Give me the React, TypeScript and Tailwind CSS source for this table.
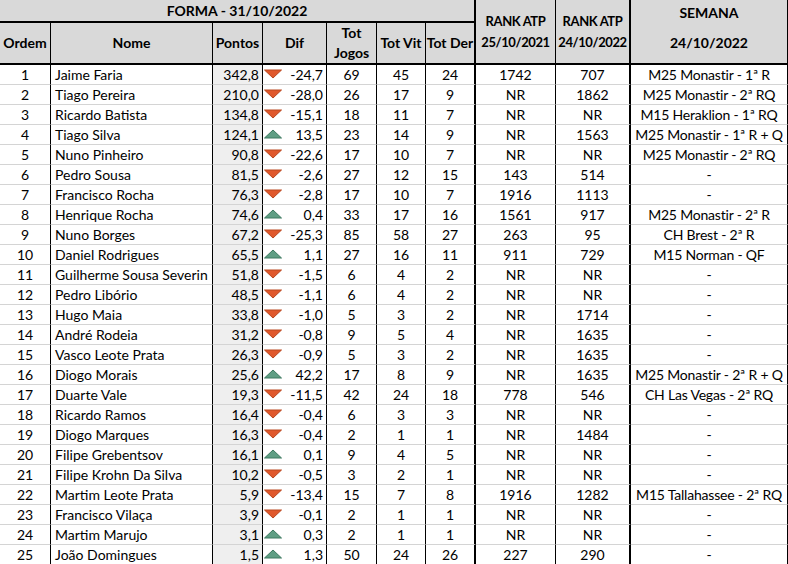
import React from "react";

type Row = [number, string, string, "u" | "d", string, number, number, number, string, string, string];

const rows: Row[] = [
  [1, "Jaime Faria", "342,8", "d", "-24,7", 69, 45, 24, "1742", "707", "M25 Monastir - 1ª R"],
  [2, "Tiago Pereira", "210,0", "d", "-28,0", 26, 17, 9, "NR", "1862", "M25 Monastir - 2ª RQ"],
  [3, "Ricardo Batista", "134,8", "d", "-15,1", 18, 11, 7, "NR", "NR", "M15 Heraklion - 1ª RQ"],
  [4, "Tiago Silva", "124,1", "u", "13,5", 23, 14, 9, "NR", "1563", "M25 Monastir - 1ª R + Q"],
  [5, "Nuno Pinheiro", "90,8", "d", "-22,6", 17, 10, 7, "NR", "NR", "M25 Monastir - 2ª RQ"],
  [6, "Pedro Sousa", "81,5", "d", "-2,6", 27, 12, 15, "143", "514", "-"],
  [7, "Francisco Rocha", "76,3", "d", "-2,8", 17, 10, 7, "1916", "1113", "-"],
  [8, "Henrique Rocha", "74,6", "u", "0,4", 33, 17, 16, "1561", "917", "M25 Monastir - 2ª R"],
  [9, "Nuno Borges", "67,2", "d", "-25,3", 85, 58, 27, "263", "95", "CH Brest - 2ª R"],
  [10, "Daniel Rodrigues", "65,5", "u", "1,1", 27, 16, 11, "911", "729", "M15 Norman - QF"],
  [11, "Guilherme Sousa Severin", "51,8", "d", "-1,5", 6, 4, 2, "NR", "NR", "-"],
  [12, "Pedro Libório", "48,5", "d", "-1,1", 6, 4, 2, "NR", "NR", "-"],
  [13, "Hugo Maia", "33,8", "d", "-1,0", 5, 3, 2, "NR", "1714", "-"],
  [14, "André Rodeia", "31,2", "d", "-0,8", 9, 5, 4, "NR", "1635", "-"],
  [15, "Vasco Leote Prata", "26,3", "d", "-0,9", 5, 3, 2, "NR", "1635", "-"],
  [16, "Diogo Morais", "25,6", "u", "42,2", 17, 8, 9, "NR", "1635", "M25 Monastir - 2ª R + Q"],
  [17, "Duarte Vale", "19,3", "d", "-11,5", 42, 24, 18, "778", "546", "CH Las Vegas - 2ª RQ"],
  [18, "Ricardo Ramos", "16,4", "d", "-0,4", 6, 3, 3, "NR", "NR", "-"],
  [19, "Diogo Marques", "16,3", "d", "-0,4", 2, 1, 1, "NR", "1484", "-"],
  [20, "Filipe Grebentsov", "16,1", "u", "0,1", 9, 4, 5, "NR", "NR", "-"],
  [21, "Filipe Krohn Da Silva", "10,2", "d", "-0,5", 3, 2, 1, "NR", "NR", "-"],
  [22, "Martim Leote Prata", "5,9", "d", "-13,4", 15, 7, 8, "1916", "1282", "M15 Tallahassee - 2ª RQ"],
  [23, "Francisco Vilaça", "3,9", "d", "-0,1", 2, 1, 1, "NR", "NR", "-"],
  [24, "Martim Marujo", "3,1", "u", "0,3", 2, 1, 1, "NR", "NR", "-"],
  [25, "João Domingues", "1,5", "u", "1,3", 50, 24, 26, "227", "290", "-"],
];

function Tri({ dir }: { dir: "u" | "d" }) {
  return (
    <svg width="18" height="10" viewBox="0 0 18 10" className="shrink-0 mb-[1px]">
      {dir === "d" ? (
        <polygon points="0.5,1 17.5,1 9,9" fill="#e0582c" stroke="#b9461f" strokeWidth="1" />
      ) : (
        <polygon points="0.5,9 17.5,9 9,1" fill="#5f9e84" stroke="#3e7a60" strokeWidth="1" />
      )}
    </svg>
  );
}

export default function App() {
  const hdr = "bg-[#d9d9d9] font-bold flex items-center justify-center text-center leading-[18px]";
  const cell = "h-[20px] border-b border-b-[#d4d4d4] flex items-center pb-[1px]";
  return (
    <div
      className="w-[788px] h-[564px] overflow-hidden bg-white text-black text-[14px]"
      style={{ fontFamily: "Lato, 'Liberation Sans', sans-serif" }}
    >
      <div className="grid grid-cols-[51px_162px_50px_64px_50px_49px_50px_80px_75px_157px] grid-rows-[23px_42px]">
        <div className={`${hdr} col-span-7 border-b-2 border-r-2 border-black`}>FORMA - 31/10/2022</div>
        <div className={`${hdr} row-span-2 border-r border-b-2 border-black flex-col text-[13px] tracking-[-0.4px] leading-[21px]`}>
          <span>RANK ATP</span>
          <span>25/10/2021</span>
        </div>
        <div className={`${hdr} row-span-2 border-r-2 border-b-2 border-black flex-col text-[13px] tracking-[-0.4px] leading-[21px]`}>
          <span>RANK ATP</span>
          <span>24/10/2022</span>
        </div>
        <div className={`${hdr} row-span-2 border-r border-b-2 border-black flex-col justify-start pt-[4px]`}>
          <span>SEMANA</span>
          <span className="mt-[12px]">24/10/2022</span>
        </div>
        <div className={`${hdr} border-r border-b-2 border-black`}>Ordem</div>
        <div className={`${hdr} border-r border-b-2 border-black`}>Nome</div>
        <div className={`${hdr} border-r border-b-2 border-black`}>Pontos</div>
        <div className={`${hdr} border-r border-b-2 border-black`}>Dif</div>
        <div className={`${hdr} border-r border-b-2 border-black flex-col leading-[20px]`}>
          <span>Tot</span>
          <span>Jogos</span>
        </div>
        <div className={`${hdr} border-r border-b-2 border-black`}>Tot Vit</div>
        <div className={`${hdr} border-r-2 border-b-2 border-black`}>Tot Der</div>
      </div>
      <div className="grid grid-cols-[51px_162px_50px_64px_50px_49px_50px_80px_75px_157px]">
        {rows.map((r) => (
          <React.Fragment key={r[0]}>
            <div className={`${cell} justify-center border-r border-r-black`}>{r[0]}</div>
            <div className={`${cell} pl-[4px] border-r border-r-black whitespace-nowrap`}>{r[1]}</div>
            <div className={`${cell} justify-end pr-[3px] bg-[#efefef] border-r border-r-black`}>{r[2]}</div>
            <div className={`${cell} justify-between pl-[1px] pr-[3px] border-r border-r-black`}>
              <Tri dir={r[3]} />
              <span>{r[4]}</span>
            </div>
            <div className={`${cell} justify-center border-r border-r-black`}>{r[5]}</div>
            <div className={`${cell} justify-center border-r border-r-black`}>{r[6]}</div>
            <div className={`${cell} justify-center border-r-2 border-r-black`}>{r[7]}</div>
            <div className={`${cell} justify-center border-r border-r-black`}>{r[8]}</div>
            <div className={`${cell} justify-center border-r-2 border-r-black`}>{r[9]}</div>
            <div className={`${cell} justify-center border-r border-r-black whitespace-nowrap tracking-[-0.2px]`}>{r[10]}</div>
          </React.Fragment>
        ))}
      </div>
    </div>
  );
}
